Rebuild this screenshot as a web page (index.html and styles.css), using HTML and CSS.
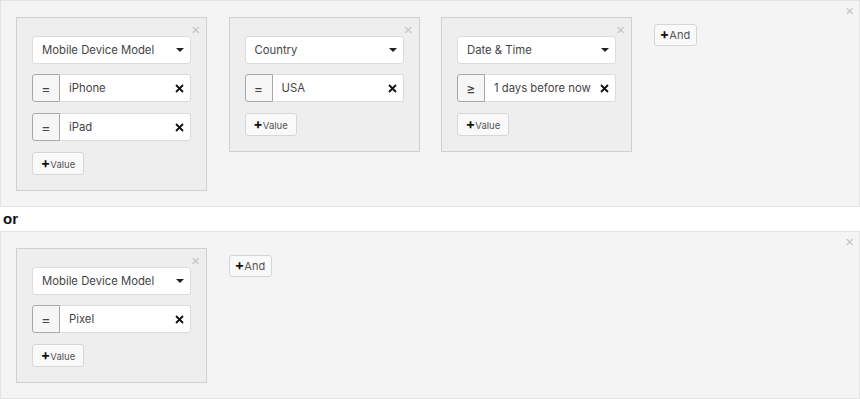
FILE: index.html
```html
<!DOCTYPE html>
<html lang="en">
<head>
    <meta charset="UTF-8">
    <title>Filter Builder</title>
    <link rel="stylesheet" href="styles.css">
</head>
<body>
    <div class="group">
        <span class="close">&times;</span>
        <div class="card">
            <span class="close">&times;</span>
            <div class="select">Mobile Device Model<span class="caret"></span></div>
            <div class="cond">
                <span class="op">=</span>
                <span class="val">iPhone</span>
                <span class="del"><svg width="9" height="9" viewBox="0 0 9 9"><path d="M1 1L8 8M8 1L1 8" stroke="#111" stroke-width="1.8"/></svg></span>
            </div>
            <div class="cond">
                <span class="op">=</span>
                <span class="val">iPad</span>
                <span class="del"><svg width="9" height="9" viewBox="0 0 9 9"><path d="M1 1L8 8M8 1L1 8" stroke="#111" stroke-width="1.8"/></svg></span>
            </div>
            <button class="add-value"><b>+</b>Value</button>
        </div>
        <div class="card">
            <span class="close">&times;</span>
            <div class="select">Country<span class="caret"></span></div>
            <div class="cond">
                <span class="op">=</span>
                <span class="val">USA</span>
                <span class="del"><svg width="9" height="9" viewBox="0 0 9 9"><path d="M1 1L8 8M8 1L1 8" stroke="#111" stroke-width="1.8"/></svg></span>
            </div>
            <button class="add-value"><b>+</b>Value</button>
        </div>
        <div class="card">
            <span class="close">&times;</span>
            <div class="select">Date &amp; Time<span class="caret"></span></div>
            <div class="cond">
                <span class="op">&ge;</span>
                <span class="val">1 days before now</span>
                <span class="del"><svg width="9" height="9" viewBox="0 0 9 9"><path d="M1 1L8 8M8 1L1 8" stroke="#111" stroke-width="1.8"/></svg></span>
            </div>
            <button class="add-value"><b>+</b>Value</button>
        </div>
        <button class="add-and"><b>+</b>And</button>
    </div>

    <div class="or">or</div>

    <div class="group">
        <span class="close">&times;</span>
        <div class="card">
            <span class="close">&times;</span>
            <div class="select">Mobile Device Model<span class="caret"></span></div>
            <div class="cond">
                <span class="op">=</span>
                <span class="val">Pixel</span>
                <span class="del"><svg width="9" height="9" viewBox="0 0 9 9"><path d="M1 1L8 8M8 1L1 8" stroke="#111" stroke-width="1.8"/></svg></span>
            </div>
            <button class="add-value"><b>+</b>Value</button>
        </div>
        <button class="add-and"><b>+</b>And</button>
    </div>
</body>
</html>
```

FILE: styles.css
```css
body {
    margin: 0;
    width: 860px;
    font-family: Inter, "Liberation Sans", sans-serif;
    font-size: 11.3px;
    color: #333;
    background: #fff;
}

.group {
    position: relative;
    display: flex;
    align-items: flex-start;
    gap: 21.5px;
    padding: 16px 15px 15px;
    background-color: #f4f4f4;
    border: 1px solid #e2e2e2;
}

.close {
    position: absolute;
    top: 3px;
    right: 5px;
    font-family: "Liberation Sans", sans-serif;
    font-size: 15px;
    line-height: 14px;
    color: #c4c4c4;
}

.card {
    position: relative;
    display: flex;
    flex-direction: column;
    align-items: flex-start;
    width: 191px;
    box-sizing: border-box;
    padding: 18px 15px 15px;
    background-color: #eeeeee;
    border: 1px solid #d0d0d0;
}

.card .close {
    top: 5px;
    right: 6px;
}

.select {
    display: flex;
    align-items: center;
    justify-content: space-between;
    width: 100%;
    height: 28px;
    box-sizing: border-box;
    padding: 0 6px 0 9px;
    margin-bottom: 10px;
    background: #fff;
    border: 1px solid #dcdcdc;
    border-radius: 3px;
    color: #444;
}

.caret {
    width: 0;
    height: 0;
    border-left: 4px solid transparent;
    border-right: 4px solid transparent;
    border-top: 4px solid #222;
}

.cond {
    display: flex;
    width: 100%;
    height: 28px;
    margin-bottom: 11px;
}

.op {
    display: flex;
    align-items: center;
    justify-content: center;
    width: 28px;
    box-sizing: border-box;
    background: #f6f6f6;
    border: 1px solid #a8a8a8;
    border-radius: 3px 0 0 3px;
    color: #444;
    font-size: 14px;
}

.val {
    flex: 1;
    display: flex;
    align-items: center;
    padding-left: 9px;
    white-space: nowrap;
    background: #fff;
    border: 1px solid #dcdcdc;
    border-left: none;
    border-right: none;
    color: #444;
}

.del {
    display: flex;
    align-items: center;
    padding: 0 6px;
    background: #fff;
    border: 1px solid #dcdcdc;
    border-left: none;
    border-radius: 0 3px 3px 0;
}

button {
    font-family: Inter, "Liberation Sans", sans-serif;
    background: #f9f9f9;
    border: 1px solid #d6d6d6;
    border-radius: 3px;
    color: #555;
    cursor: pointer;
}

button b {
    color: #111;
    font-size: 14px;
    line-height: 10px;
}

.add-value {
    height: 23px;
    width: 52px;
    padding: 0;
    font-size: 9.5px;
}

.add-and {
    margin-top: 7px;
    height: 22px;
    width: 43px;
    padding: 0;
    font-size: 11px;
}

.or {
    height: 24px;
    line-height: 24px;
    padding-left: 3px;
    font-family: "Liberation Sans", sans-serif;
    font-size: 15px;
    font-weight: bold;
    color: #111;
}
```
